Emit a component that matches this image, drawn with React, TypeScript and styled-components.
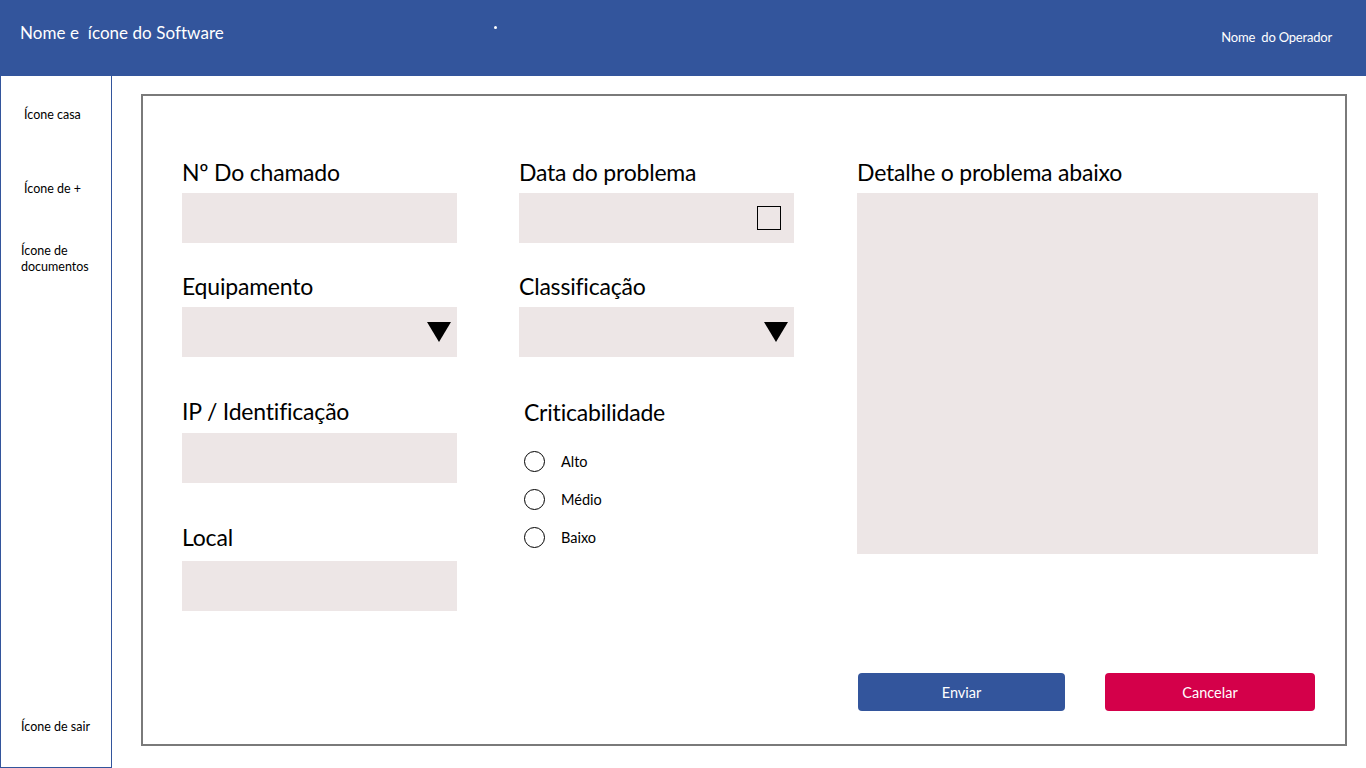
import styled, { createGlobalStyle } from 'styled-components'

const GlobalStyle = createGlobalStyle`
	* { box-sizing: border-box; }
	body {
		margin: 0;
		font-family: Lato, 'Open Sans', sans-serif;
		color: #000;
		background: #fff;
	}
`

const Page = styled.div`
	width: 1366px;
	height: 768px;
	display: flex;
	flex-direction: column;
	overflow: hidden;
`

const Header = styled.header`
	height: 76px;
	background: #33559c;
	color: #fff;
	display: flex;
	align-items: flex-start;
	justify-content: space-between;
	position: relative;
	flex-shrink: 0;
`

const Brand = styled.h1`
	margin: 22px 0 0 20px;
	font-size: 17px;
	font-weight: 400;
	line-height: 22px;
	white-space: pre;
	letter-spacing: 0.05px;
`

const Dot = styled.span`
	position: absolute;
	left: 494px;
	top: 26px;
	width: 3px;
	height: 3px;
	background: #fff;
	border-radius: 50%;
`

const Operator = styled.div`
	margin: 29px 34px 0 0;
	font-size: 13px;
	line-height: 16px;
	white-space: pre;
	letter-spacing: -0.2px;
`

const Body = styled.div`
	flex: 1;
	display: flex;
`

const Sidebar = styled.nav`
	width: 112px;
	border: 1px solid #33559c;
	border-top: none;
	display: flex;
	flex-direction: column;
	padding-top: 31px;
	padding-bottom: 32px;
`

const NavItem = styled.div<{ $top?: number; $left?: number; $bottom?: boolean }>`
	margin-top: ${p => (p.$bottom ? 'auto' : `${p.$top ?? 0}px`)};
	padding-left: ${p => p.$left ?? 23}px;
	font-size: 12.5px;
	line-height: 16px;
`

const Main = styled.main`
	flex: 1;
	padding: 18px 19px 22px 29px;
`

const Panel = styled.section`
	height: 100%;
	border: 2px solid #7a7a7a;
	padding: 62px 27px 33px 39px;
	display: grid;
	grid-template-columns: 275px 275px 462px;
	column-gap: 62px;
`

const Column = styled.div<{ $shift?: number }>`
	display: flex;
	flex-direction: column;
	margin-left: ${p => p.$shift ?? 0}px;
`

const Field = styled.div<{ $top?: number }>`
	margin-top: ${p => p.$top ?? 0}px;
	display: flex;
	flex-direction: column;
`

const Label = styled.label<{ $gap?: number; $indent?: number }>`
	font-size: 23px;
	line-height: 28px;
	margin-bottom: ${p => p.$gap ?? 7}px;
	padding-left: ${p => p.$indent ?? 0}px;
	letter-spacing: -0.2px;
`

const Box = styled.div<{ $height?: number; $pad?: number }>`
	height: ${p => p.$height ?? 50}px;
	background: #ede6e6;
	display: flex;
	align-items: center;
	justify-content: flex-end;
	padding-right: ${p => p.$pad ?? 14}px;
`

const Arrow = styled.span`
	width: 0;
	height: 0;
	border-left: 12px solid transparent;
	border-right: 12px solid transparent;
	border-top: 20px solid #000;
`

const CheckSquare = styled.span`
	width: 24px;
	height: 24px;
	border: 1.5px solid #000;
`

const RadioList = styled.div`
	margin-top: 18px;
	padding-left: 5px;
	display: flex;
	flex-direction: column;
	gap: 17px;
`

const RadioRow = styled.label`
	display: flex;
	align-items: center;
	gap: 16px;
	font-size: 14.5px;
	line-height: 21px;
`

const Circle = styled.span`
	width: 21px;
	height: 21px;
	border: 1.5px solid #000;
	border-radius: 50%;
`

const Actions = styled.div`
	margin-top: auto;
	display: flex;
	gap: 40px;
	padding-left: 1px;
`

const Button = styled.button<{ $tone: 'blue' | 'red'; $width: number }>`
	width: ${p => p.$width}px;
	height: 38px;
	border: none;
	border-radius: 4px;
	background: ${p => (p.$tone === 'blue' ? '#33559c' : '#d4004a')};
	color: #fff;
	font-family: Lato, 'Open Sans', sans-serif;
	font-size: 14.5px;
	cursor: pointer;
`

const App = () => {
	return (
		<>
			<GlobalStyle />
			<Page>
				<Header>
					<Brand>Nome e  ícone do Software</Brand>
					<Dot />
					<Operator>Nome  do Operador</Operator>
				</Header>
				<Body>
					<Sidebar>
						<NavItem>Ícone casa</NavItem>
						<NavItem $top={58}>Ícone de +</NavItem>
						<NavItem $top={46} $left={20}>
							Ícone de
							<br />
							documentos
						</NavItem>
						<NavItem $left={20} $bottom>
							Ícone de sair
						</NavItem>
					</Sidebar>
					<Main>
						<Panel>
							<Column>
								<Field>
									<Label>Nº Do chamado</Label>
									<Box />
								</Field>
								<Field $top={29}>
									<Label>Equipamento</Label>
									<Box $pad={6}>
										<Arrow />
									</Box>
								</Field>
								<Field $top={40}>
									<Label $gap={8}>IP / Identificação</Label>
									<Box />
								</Field>
								<Field $top={40}>
									<Label $gap={10}>Local</Label>
									<Box />
								</Field>
							</Column>
							<Column>
								<Field>
									<Label>Data do problema</Label>
									<Box $pad={13}>
										<CheckSquare />
									</Box>
								</Field>
								<Field $top={29}>
									<Label>Classificação</Label>
									<Box $pad={6}>
										<Arrow />
									</Box>
								</Field>
								<Field $top={41}>
									<Label $indent={5}>Criticabilidade</Label>
									<RadioList>
										<RadioRow>
											<Circle />
											Alto
										</RadioRow>
										<RadioRow>
											<Circle />
											Médio
										</RadioRow>
										<RadioRow>
											<Circle />
											Baixo
										</RadioRow>
									</RadioList>
								</Field>
							</Column>
							<Column $shift={1}>
								<Field>
									<Label>Detalhe o problema abaixo</Label>
									<Box $height={361} />
								</Field>
								<Actions>
									<Button $tone='blue' $width={207}>
										Enviar
									</Button>
									<Button $tone='red' $width={210}>
										Cancelar
									</Button>
								</Actions>
							</Column>
						</Panel>
					</Main>
				</Body>
			</Page>
		</>
	)
}

export default App
